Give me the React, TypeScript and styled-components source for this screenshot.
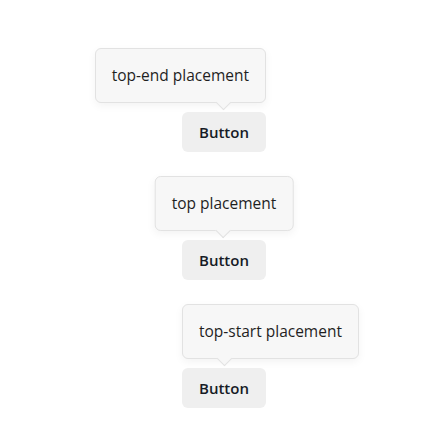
import React from "react";
import styled, { createGlobalStyle, css } from "styled-components";

type Placement = "top-end" | "top" | "top-start";

const GlobalStyle = createGlobalStyle`
  html, body {
    margin: 0;
    padding: 0;
    background: #ffffff;
  }
  body {
    font-family: "Open Sans", "Noto Sans", sans-serif;
    color: #1c1c1c;
  }
`;

const Page = styled.div`
  display: flex;
  flex-direction: column;
  align-items: center;
  gap: 88px;
  padding: 112px 0 32px;
`;

const Anchor = styled.div`
  position: relative;
  display: inline-flex;
`;

const Button = styled.button`
  height: 40px;
  width: 84px;
  padding: 0;
  border: none;
  border-radius: 6px;
  background: #efefef;
  color: #161b26;
  font-family: inherit;
  font-size: 15px;
  font-weight: 600;
  cursor: pointer;
`;

const Tip = styled.div<{ $placement: Placement }>`
  position: absolute;
  bottom: calc(100% + 9px);
  box-sizing: border-box;
  padding: 16px;
  white-space: nowrap;
  font-size: 15.5px;
  line-height: 21px;
  color: #1f1f1f;
  background: #f7f7f7;
  border: 1px solid #e2e2e2;
  border-radius: 6px;
  box-shadow: 0 3px 8px rgba(0, 0, 0, 0.05);

  ${({ $placement }) =>
    $placement === "top-end"
      ? css`
          right: 0;
        `
      : $placement === "top-start"
      ? css`
          left: 0;
        `
      : css`
          left: 50%;
          transform: translateX(-50%);
        `}
`;

const Arrow = styled.span<{ $placement: Placement }>`
  position: absolute;
  top: 100%;
  width: 10px;
  height: 10px;
  margin-top: -5px;
  background: #f7f7f7;
  border-right: 1px solid #e2e2e2;
  border-bottom: 1px solid #e2e2e2;
  transform: rotate(45deg);

  ${({ $placement }) =>
    $placement === "top-end"
      ? css`
          right: 36px;
        `
      : $placement === "top-start"
      ? css`
          left: 36px;
        `
      : css`
          left: calc(50% - 6px);
        `}
`;

const items: { placement: Placement; label: string }[] = [
  { placement: "top-end", label: "top-end placement" },
  { placement: "top", label: "top placement" },
  { placement: "top-start", label: "top-start placement" },
];

const App = () => {
  return (
    <>
      <GlobalStyle />
      <Page>
        {items.map((item) => (
          <Anchor key={item.placement}>
            <Tip $placement={item.placement}>
              {item.label}
              <Arrow $placement={item.placement} />
            </Tip>
            <Button>Button</Button>
          </Anchor>
        ))}
      </Page>
    </>
  );
};

export default App;
